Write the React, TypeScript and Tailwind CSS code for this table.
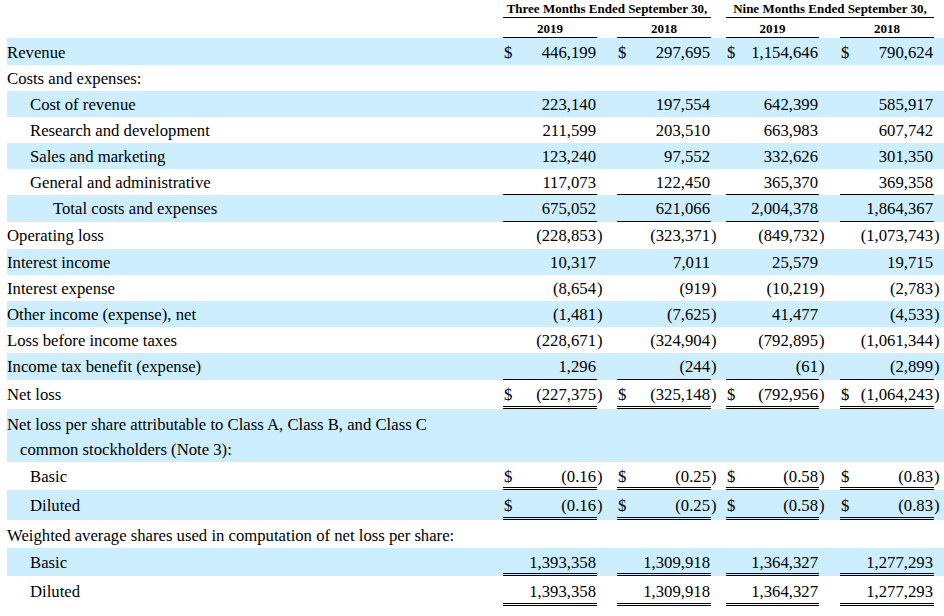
type Line = 'single' | 'double';

interface Row {
  label: string;
  h: string;
  pt?: string;
  indent?: 0 | 1 | 2;
  band?: boolean;
  dollar?: boolean;
  vals?: string[];
  line?: Line;
}

const amountW = ['w-[94px]', 'w-[94px]', 'w-[93px]', 'w-[94px]'];
const gapW = ['w-[20px]', 'w-[15px]', 'w-[21px]', 'w-[10px]'];
const indentCls = ['', 'pl-[23px]', 'pl-[46px]'];

const eps = ['(0.16)', '(0.25)', '(0.58)', '(0.83)'];
const shares = ['1,393,358', '1,309,918', '1,364,327', '1,277,293'];

const rows: Row[] = [
  { label: 'Revenue', h: 'h-[27px]', pt: 'pt-[3px]', band: true, dollar: true, vals: ['446,199', '297,695', '1,154,646', '790,624'] },
  { label: 'Costs and expenses:', h: 'h-[26px]' },
  { label: 'Cost of revenue', h: 'h-[26px]', indent: 1, band: true, vals: ['223,140', '197,554', '642,399', '585,917'] },
  { label: 'Research and development', h: 'h-[26px]', indent: 1, vals: ['211,599', '203,510', '663,983', '607,742'] },
  { label: 'Sales and marketing', h: 'h-[26px]', indent: 1, band: true, vals: ['123,240', '97,552', '332,626', '301,350'] },
  { label: 'General and administrative', h: 'h-[26px]', indent: 1, vals: ['117,073', '122,450', '365,370', '369,358'], line: 'single' },
  { label: 'Total costs and expenses', h: 'h-[27px]', indent: 2, band: true, vals: ['675,052', '621,066', '2,004,378', '1,864,367'], line: 'single' },
  { label: 'Operating loss', h: 'h-[27px]', vals: ['(228,853)', '(323,371)', '(849,732)', '(1,073,743)'] },
  { label: 'Interest income', h: 'h-[26px]', band: true, vals: ['10,317', '7,011', '25,579', '19,715'] },
  { label: 'Interest expense', h: 'h-[26px]', vals: ['(8,654)', '(919)', '(10,219)', '(2,783)'] },
  { label: 'Other income (expense), net', h: 'h-[26px]', band: true, vals: ['(1,481)', '(7,625)', '41,477', '(4,533)'] },
  { label: 'Loss before income taxes', h: 'h-[26px]', vals: ['(228,671)', '(324,904)', '(792,895)', '(1,061,344)'] },
  { label: 'Income tax benefit (expense)', h: 'h-[27px]', band: true, vals: ['1,296', '(244)', '(61)', '(2,899)'], line: 'single' },
  { label: 'Net loss', h: 'h-[29px]', pt: 'pt-[3px]', dollar: true, vals: ['(227,375)', '(325,148)', '(792,956)', '(1,064,243)'], line: 'double' },
];

const lowerRows: Row[] = [
  { label: 'Basic', h: 'h-[28px]', pt: 'pt-[3px]', indent: 1, dollar: true, vals: eps, line: 'double' },
  { label: 'Diluted', h: 'h-[30px]', pt: 'pt-[4px]', indent: 1, band: true, dollar: true, vals: eps, line: 'double' },
  { label: 'Weighted average shares used in computation of net loss per share:', h: 'h-[28px]', pt: 'pt-[4px]' },
  { label: 'Basic', h: 'h-[28px]', pt: 'pt-[3px]', indent: 1, band: true, vals: shares, line: 'double' },
  { label: 'Diluted', h: 'h-[30px]', pt: 'pt-[4px]', indent: 1, vals: shares, line: 'double' },
];

function lineCls(line?: Line) {
  if (line === 'single') return 'border-b border-black';
  if (line === 'double') return 'border-b-[3px] border-double border-black';
  return '';
}

function DataRow({ row }: { row: Row }) {
  const pt = row.pt ?? 'pt-[2px]';
  return (
    <div className={`flex ${row.h} ${row.band ? 'bg-[#cceeff]' : ''}`}>
      <div className={`w-[496px] flex-none whitespace-nowrap leading-[24px] ${pt} ${indentCls[row.indent ?? 0]}`}>{row.label}</div>
      {[0, 1, 2, 3].map((i) => {
        const raw = row.vals?.[i] ?? '';
        const neg = raw.endsWith(')');
        const shown = neg ? raw.slice(0, -1) : raw;
        return (
          <div key={i} className="flex flex-none">
            <div className={`${amountW[i]} flex justify-between leading-[24px] px-px ${pt} ${row.vals ? lineCls(row.line) : ''}`}>
              <span>{row.dollar ? '$' : ''}</span>
              <span>{shown}</span>
            </div>
            <div className={`${gapW[i]} leading-[24px] ${pt}`}>{neg ? ')' : ''}</div>
          </div>
        );
      })}
    </div>
  );
}

export default function App() {
  return (
    <div className="w-[944px] h-[616px] overflow-hidden bg-white pl-[7px] text-black text-[16.7px] font-['Liberation_Serif',serif]">
      <div className="flex text-[13px] font-bold">
        <div className="w-[496px] flex-none" />
        <div className="w-[208px] flex-none h-[18px] leading-[17px] text-center border-b border-black">Three Months Ended September 30,</div>
        <div className="w-[15px] flex-none" />
        <div className="w-[208px] flex-none h-[18px] leading-[17px] text-center border-b border-black">Nine Months Ended September 30,</div>
        <div className="w-[10px] flex-none" />
      </div>
      <div className="flex text-[13px] font-bold">
        <div className="w-[496px] flex-none" />
        {['2019', '2018', '2019', '2018'].map((y, i) => (
          <div key={i} className="flex flex-none">
            <div className={`${amountW[i]} h-[20px] pt-[2px] leading-[17px] text-center border-b border-black`}>{y}</div>
            <div className={gapW[i]} />
          </div>
        ))}
      </div>

      {rows.map((r, i) => (
        <DataRow key={i} row={r} />
      ))}

      <div className="h-[53px] bg-[#cceeff] pt-[3px] leading-[25px]">
        <div>Net loss per share attributable to Class A, Class B, and Class C</div>
        <div className="pl-[13px]">common stockholders (Note 3):</div>
      </div>

      {lowerRows.map((r, i) => (
        <DataRow key={i} row={r} />
      ))}
    </div>
  );
}
